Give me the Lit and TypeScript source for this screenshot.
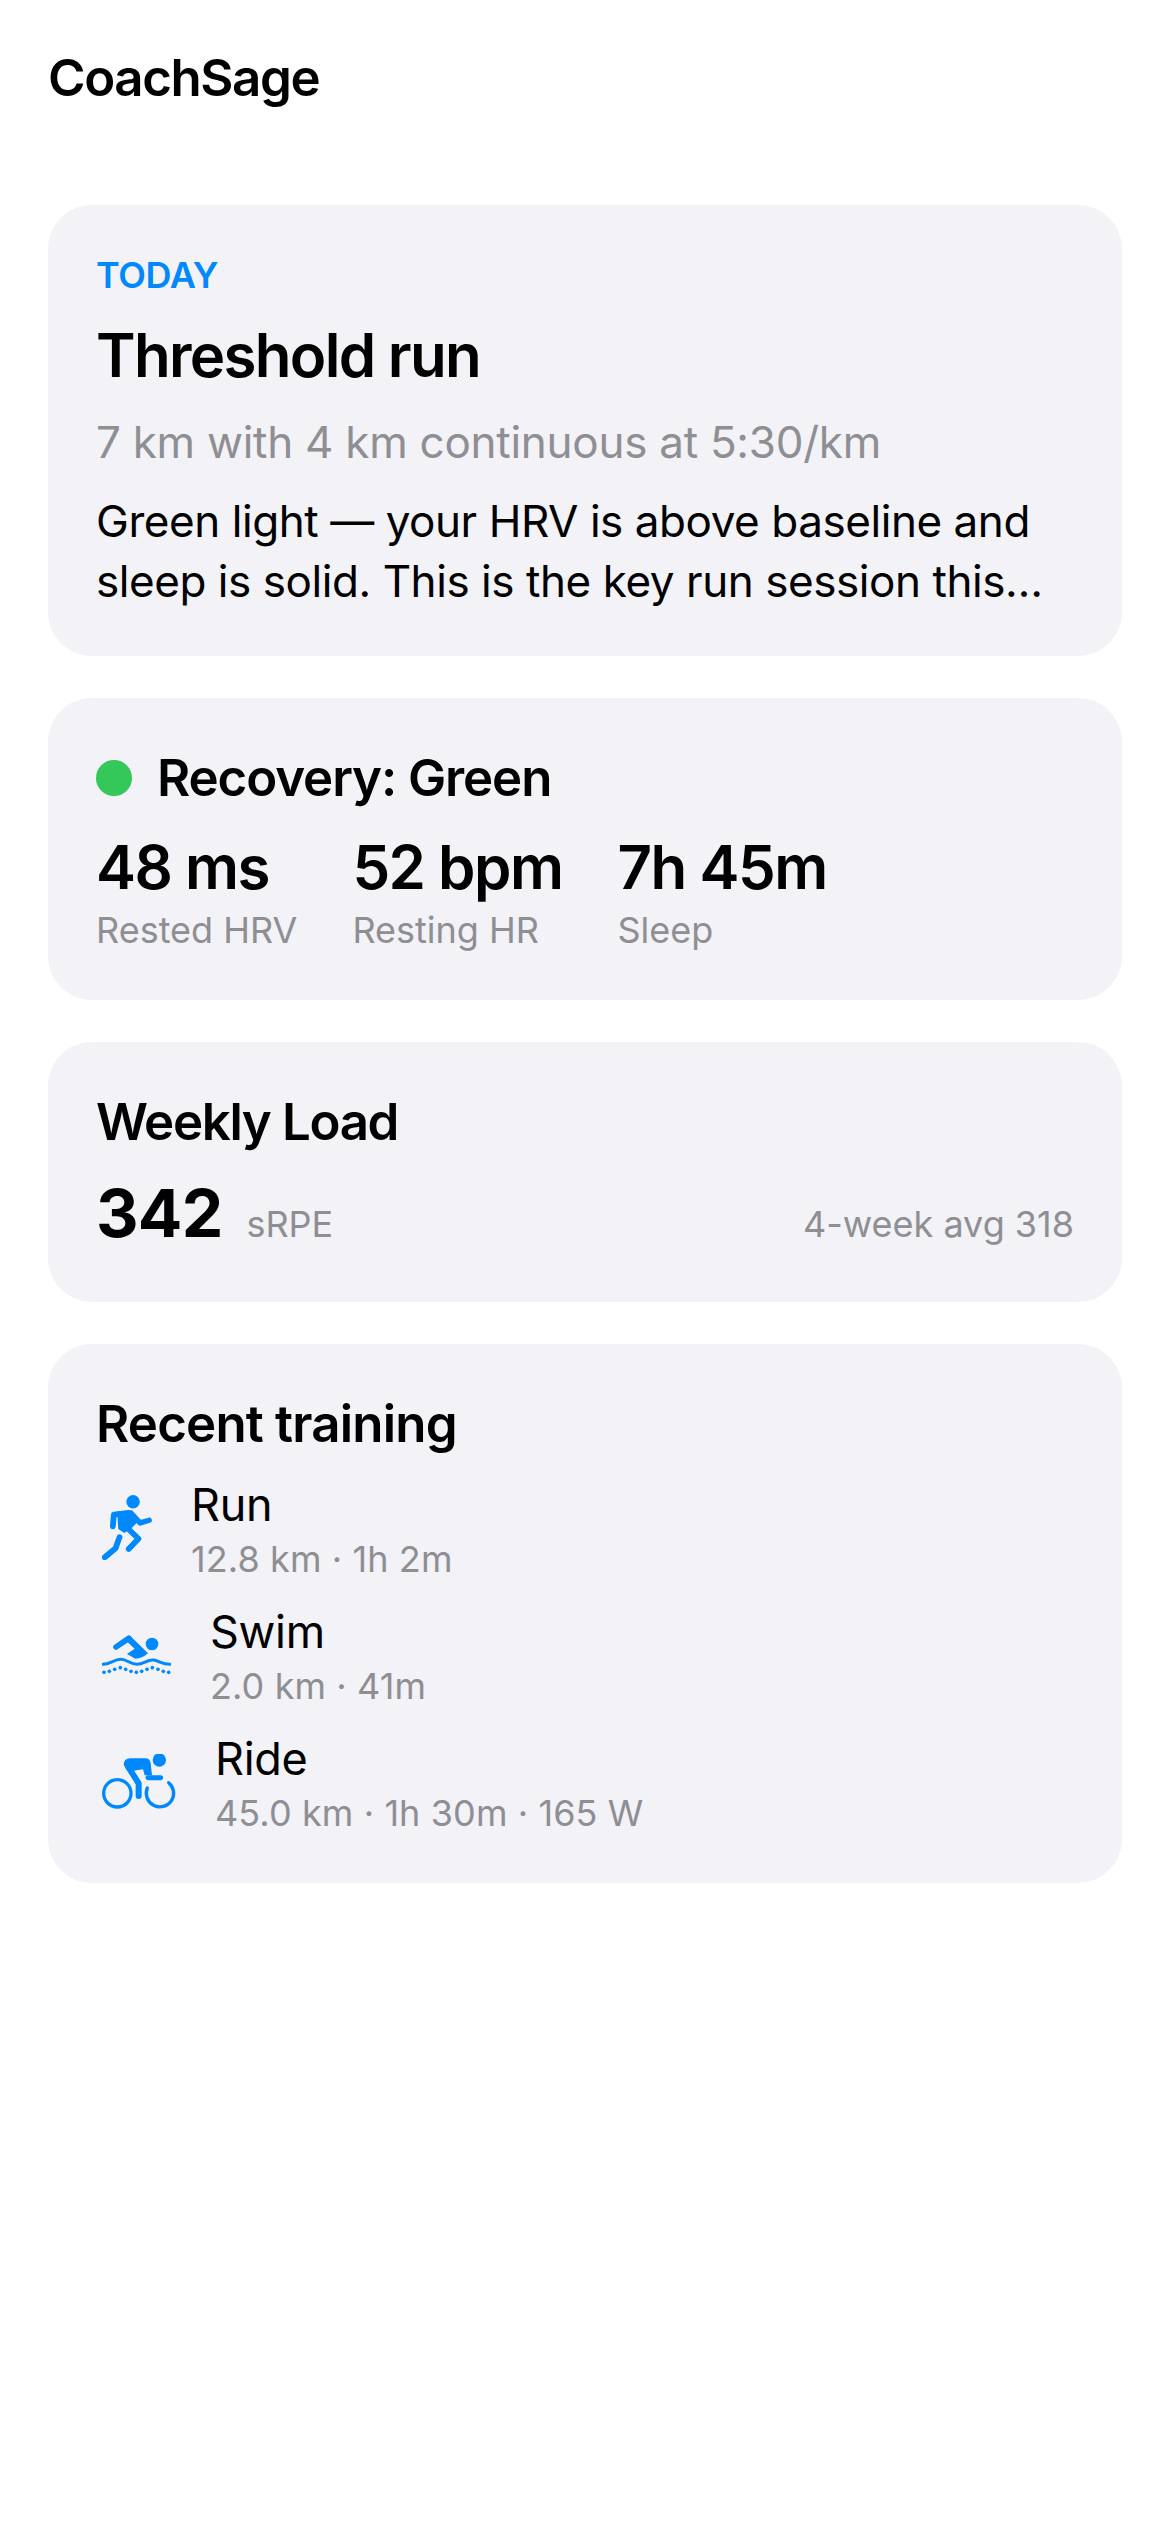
import { LitElement, html, css, svg } from "lit";
import { customElement } from "lit/decorators.js";

const runIcon = svg`<svg class="ic" width="50" height="65" viewBox="70 47 148 193" fill="#0088ff">
  <circle cx="162" cy="67" r="20"/>
  <path d="M102 140 L105 105 L150 100" fill="none" stroke="#0088ff" stroke-width="17" stroke-linecap="round" stroke-linejoin="round"/>
  <path d="M160 105 L183 130 L210 122" fill="none" stroke="#0088ff" stroke-width="16" stroke-linecap="round" stroke-linejoin="round"/>
  <path d="M115 96 L160 92 L178 125 L155 148 L136 160 L118 148 Z"/>
  <path d="M142 142 L178 177 L149 207" fill="none" stroke="#0088ff" stroke-width="17" stroke-linecap="round" stroke-linejoin="round"/>
  <path d="M122 172 L110 205 L78 232" fill="none" stroke="#0088ff" stroke-width="17" stroke-linecap="round" stroke-linejoin="round"/>
</svg>`;

const swimIcon = svg`<svg class="ic" width="69" height="40" viewBox="40 47 207 120" fill="#0088ff">
  <circle cx="190" cy="74" r="19"/>
  <path d="M82 83 L120 57" fill="none" stroke="#0088ff" stroke-width="17" stroke-linecap="round"/>
  <path d="M125 50 L178 102 Q160 118 140 118 L115 104 L138 88 L114 66 Z"/>
  <path d="M43 135 C65 135 75 120 97 120 C115 120 125 135 145 135 C165 135 175 120 195 122 C210 124 220 135 244 135" fill="none" stroke="#0088ff" stroke-width="9" stroke-linecap="round"/>
  <circle cx="46" cy="159" r="5.5"/><circle cx="62" cy="156" r="5.5"/><circle cx="78" cy="150" r="5.5"/><circle cx="95" cy="145" r="5.5"/><circle cx="111" cy="150" r="5.5"/><circle cx="127" cy="156" r="5.5"/><circle cx="143" cy="159" r="5.5"/><circle cx="159" cy="156" r="5.5"/><circle cx="175" cy="150" r="5.5"/><circle cx="191" cy="145" r="5.5"/><circle cx="208" cy="150" r="5.5"/><circle cx="224" cy="156" r="5.5"/><circle cx="240" cy="159" r="5.5"/>
</svg>`;

const rideIcon = svg`<svg class="ic" width="74" height="56" viewBox="40 72 222 168" fill="#0088ff">
  <circle cx="212" cy="90" r="20"/>
  <circle cx="86" cy="190" r="41" fill="none" stroke="#0088ff" stroke-width="10"/>
  <path d="M176 174 A41 41 0 1 0 240 158" fill="none" stroke="#0088ff" stroke-width="10" stroke-linecap="round"/>
  <path d="M105 105 Q105 85 125 85 L170 85 Q184 85 186 100 L190 136 L168 136 L163 118 L135 122 L120 125 Z"/>
  <path d="M118 110 L150 160 L150 198" fill="none" stroke="#0088ff" stroke-width="18" stroke-linecap="round" stroke-linejoin="round"/>
  <path d="M178 143 L216 143" fill="none" stroke="#0088ff" stroke-width="15" stroke-linecap="round"/>
</svg>`;

@customElement("app-root")
export class AppRoot extends LitElement {
  static styles = css`
    :host {
      display: block;
      min-height: 2532px;
      background: #fff;
      font-family: Inter, "Liberation Sans", sans-serif;
      color: #000;
    }
    .page { padding: 48px 48px 0; display: flex; flex-direction: column; }
    .app-title { font-size: 51px; font-weight: 600; line-height: 60px; letter-spacing: -1.4px; margin-bottom: 97px; }
    .cards { display: flex; flex-direction: column; gap: 42px; }
    .card { background: #f2f2f7; border-radius: 44px; padding: 48px; }
    .today { padding-bottom: 45px; }
    .eyebrow { color: #0088ff; font-size: 36px; font-weight: 600; line-height: 44px; letter-spacing: -0.4px; }
    .headline { font-size: 60px; font-weight: 600; line-height: 72px; letter-spacing: -1.7px; margin-top: 22px; }
    .sub { font-size: 44px; line-height: 54px; color: #8e8e93; margin-top: 24px; letter-spacing: -0.27px; }
    .body { font-size: 44px; line-height: 60px; margin-top: 22px; letter-spacing: -0.44px; }
    .rec { display: flex; align-items: center; gap: 25px; }
    .dot { width: 36px; height: 36px; border-radius: 50%; background: #34c759; }
    .h2 { font-size: 51px; font-weight: 600; line-height: 64px; letter-spacing: -0.8px; }
    .tight { letter-spacing: -1.35px; }
    .snug { letter-spacing: -1.1px; }
    .metrics { display: flex; gap: 55px; margin-top: 21px; }
    .val { font-size: 60px; font-weight: 600; line-height: 72px; letter-spacing: -1.5px; }
    .lab { font-size: 36px; line-height: 44px; color: #8e8e93; margin-top: 5px; }
    .load { display: flex; align-items: baseline; margin-top: 18px; }
    .big { font-size: 66px; font-weight: 700; line-height: 82px; letter-spacing: -0.8px; }
    .unit { font-size: 36px; color: #8e8e93; margin-left: 24px; }
    .avg { font-size: 36px; color: #8e8e93; margin-left: auto; }
    .list { display: flex; flex-direction: column; gap: 24px; margin-top: 22px; padding-left: 6px; }
    .row { display: flex; align-items: center; gap: 39px; }
    .ic { display: block; flex: none; margin-bottom: 4px; }
    .name { font-size: 45px; line-height: 54px; letter-spacing: -0.3px; }
    .det { font-size: 36px; line-height: 44px; color: #8e8e93; margin-top: 5px; letter-spacing: 0.1px; }
  `;

  render() {
    return html`<div class="page">
      <div class="app-title">CoachSage</div>
      <div class="cards">
        <section class="card today">
          <div class="eyebrow">TODAY</div>
          <div class="headline">Threshold run</div>
          <div class="sub">7 km with 4 km continuous at 5:30/km</div>
          <div class="body">Green light — your HRV is above baseline and sleep is solid. This is the key run session this…</div>
        </section>
        <section class="card">
          <div class="rec"><span class="dot"></span><span class="h2 snug">Recovery: Green</span></div>
          <div class="metrics">
            <div><div class="val">48 ms</div><div class="lab">Rested HRV</div></div>
            <div><div class="val">52 bpm</div><div class="lab">Resting HR</div></div>
            <div><div class="val">7h 45m</div><div class="lab">Sleep</div></div>
          </div>
        </section>
        <section class="card">
          <div class="h2 tight">Weekly Load</div>
          <div class="load"><span class="big">342</span><span class="unit">sRPE</span><span class="avg">4-week avg 318</span></div>
        </section>
        <section class="card">
          <div class="h2">Recent training</div>
          <div class="list">
            <div class="row">${runIcon}<div><div class="name">Run</div><div class="det">12.8 km · 1h 2m</div></div></div>
            <div class="row">${swimIcon}<div><div class="name">Swim</div><div class="det">2.0 km · 41m</div></div></div>
            <div class="row">${rideIcon}<div><div class="name">Ride</div><div class="det">45.0 km · 1h 30m · 165 W</div></div></div>
          </div>
        </section>
      </div>
    </div>`;
  }
}
